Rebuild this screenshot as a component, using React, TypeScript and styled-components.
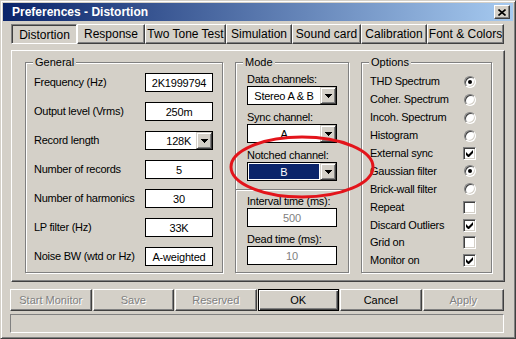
import React from "react";
import styled, { createGlobalStyle, css } from "styled-components";

const FACE = "#D4D0C8";

const Global = createGlobalStyle`
  html, body { margin: 0; padding: 0; background: ${FACE}; }
  body { font-family: "Liberation Sans", Arial, sans-serif; font-size: 11px; color: #000; }
  * { box-sizing: border-box; }
`;

const raised = css`
  border: 1px solid;
  border-color: #fff #404040 #404040 #fff;
  box-shadow: inset -1px -1px 0 #808080;
`;

const Window = styled.div`
  position: relative;
  width: 516px;
  height: 339px;
  background: ${FACE};
  border: 1px solid;
  border-color: ${FACE} #404040 #404040 ${FACE};
  box-shadow: inset 1px 1px 0 #fff, inset -1px -1px 0 #808080;
  padding: 2px;
  display: flex;
  flex-direction: column;
`;

const TitleBar = styled.div`
  height: 18px;
  flex: none;
  background: linear-gradient(to right, #0a246a, #a6caf0);
  display: flex;
  align-items: center;
  justify-content: space-between;
  padding: 0 3px 0 9px;
`;

const Title = styled.span`
  color: #fff;
  font-weight: bold;
  font-size: 12px;
  line-height: 14px;
`;

const CloseButton = styled.div`
  width: 16px;
  height: 14px;
  background: ${FACE};
  ${raised};
  display: flex;
  align-items: center;
  justify-content: center;
`;

const TabBar = styled.div`
  display: flex;
  margin: 3px 0 0 8px;
  height: 20px;
  flex: none;
`;

const Tab = styled.div<{ $w: number; $active?: boolean }>`
  width: ${(p) => p.$w}px;
  height: 20px;
  display: flex;
  align-items: center;
  justify-content: center;
  font-size: 12px;
  white-space: nowrap;
  background: ${FACE};
  ${(p) =>
    p.$active
      ? css`
          border: 1px solid;
          border-color: #808080 #fff #fff #808080;
          box-shadow: inset 1px 1px 0 #404040;
          padding: 1px 0 0 1px;
        `
      : raised}
`;

const Panel = styled.div`
  margin: 6px 0 0 8px;
  width: 494px;
  height: 232px;
  flex: none;
  ${raised};
  padding: 11px 0 0 13px;
  display: grid;
  grid-template-columns: 198px 114px 131px;
  column-gap: 12px;
  align-items: start;
`;

const Group = styled.div`
  position: relative;
  height: 211px;
  border: 1px solid #808080;
  box-shadow: inset 1px 1px 0 #fff, 1px 1px 0 #fff;
`;

const Caption = styled.span`
  position: absolute;
  top: -7px;
  left: 7px;
  padding: 0 2px;
  background: ${FACE};
  line-height: 13px;
  font-size: 11px;
`;

const GeneralBody = styled.div`
  display: flex;
  flex-direction: column;
  gap: 10px;
  padding: 10px 9px 0 8px;
`;

const Row = styled.div`
  display: flex;
  align-items: center;
  justify-content: space-between;
  height: 19px;
`;

const Label = styled.span`
  font-size: 11px;
  letter-spacing: -0.25px;
  white-space: nowrap;
  line-height: 13px;
`;

const EditBox = styled.div<{ $w: number; $muted?: boolean }>`
  width: ${(p) => p.$w}px;
  height: 19px;
  border: 1px solid #000;
  background: #fff;
  display: flex;
  align-items: center;
  justify-content: center;
  font-size: 11px;
  letter-spacing: -0.2px;
  color: ${(p) => (p.$muted ? "#808080" : "#000")};
`;

const Combo = styled.div<{ $w: number }>`
  width: ${(p) => p.$w}px;
  height: 19px;
  border: 1px solid #000;
  background: #fff;
  display: flex;
  align-items: center;
`;

const ComboField = styled.div<{ $align: "center" | "flex-end" }>`
  flex: 1;
  align-self: stretch;
  display: flex;
  align-items: center;
  justify-content: ${(p) => p.$align};
  padding: ${(p) => (p.$align === "flex-end" ? "0 5px 0 0" : "0")};
  font-size: 11px;
  letter-spacing: -0.25px;
  white-space: nowrap;
`;

const Highlight = styled.div`
  flex: 1;
  align-self: stretch;
  margin: 1px;
  background: #0a246a;
  color: #fff;
  display: flex;
  align-items: center;
  justify-content: center;
  font-size: 11px;
`;

const DropButton = styled.div`
  width: 16px;
  height: 17px;
  flex: none;
  background: ${FACE};
  border: 1px solid;
  border-color: ${FACE} #404040 #404040 ${FACE};
  box-shadow: inset 1px 1px 0 #fff, inset -1px -1px 0 #808080;
  display: flex;
  align-items: center;
  justify-content: center;
`;

const ModeBody = styled.div`
  display: flex;
  flex-direction: column;
  padding: 10px 11px 0 11px;
`;

const Stack = styled.div<{ $mt?: number }>`
  display: flex;
  flex-direction: column;
  gap: 6px;
  margin-top: ${(p) => p.$mt ?? 0}px;
`;

const Field = styled.div`
  display: flex;
  flex-direction: column;
`;

const Divider = styled.div`
  height: 2px;
  margin: 8px -11px 0 -11px;
  border-top: 1px solid #808080;
  border-bottom: 1px solid #fff;
`;

const OptionsBody = styled.div`
  display: flex;
  flex-direction: column;
  padding: 10px 15px 0 8px;
`;

const OptionRow = styled.div`
  display: flex;
  align-items: center;
  justify-content: space-between;
  height: 17.9px;
`;

const Radio = styled.div<{ $on?: boolean }>`
  position: relative;
  width: 12px;
  height: 12px;
  border-radius: 50%;
  background: #fff;
  border: 1px solid;
  border-color: #808080 #fff #fff #808080;
  box-shadow: inset 1px 1px 0 #404040, inset -1px -1px 0 ${FACE};
  &::after {
    content: "";
    display: ${(p) => (p.$on ? "block" : "none")};
    position: absolute;
    left: 3px;
    top: 3px;
    width: 4px;
    height: 4px;
    border-radius: 50%;
    background: #000;
  }
`;

const CheckBox = styled.div`
  width: 13px;
  height: 13px;
  background: #fff;
  border: 1px solid;
  border-color: #808080 #fff #fff #808080;
  box-shadow: inset 1px 1px 0 #404040, inset -1px -1px 0 ${FACE};
  display: flex;
  align-items: center;
  justify-content: center;
`;

const ButtonRow = styled.div`
  margin: 7px 0 0 7px;
  width: 494px;
  height: 22px;
  flex: none;
  display: grid;
  grid-template-columns: repeat(6, 1fr);
  column-gap: 1px;
`;

const Button = styled.div<{ $disabled?: boolean; $default?: boolean }>`
  height: 22px;
  background: ${FACE};
  display: flex;
  align-items: center;
  justify-content: center;
  font-size: 11px;
  white-space: nowrap;
  ${(p) =>
    p.$default
      ? css`
          border: 1px solid #000;
          box-shadow: inset 1px 1px 0 #fff, inset -1px -1px 0 #404040, inset -2px -2px 0 #808080;
        `
      : raised}
  ${(p) =>
    p.$disabled &&
    css`
      color: #808080;
      text-shadow: 1px 1px 0 #fff;
    `}
`;

const StatusBar = styled.div`
  margin: 3px 0 0 7px;
  width: 494px;
  height: 19px;
  flex: none;
  border: 1px solid;
  border-color: #808080 #fff #fff #808080;
`;

const Annotation = styled.svg`
  position: absolute;
  left: 225px;
  top: 131px;
  pointer-events: none;
`;

const Arrow = () => (
  <svg width="7" height="4" viewBox="0 0 7 4">
    <path d="M0 0h7L3.5 4z" fill="#000" shapeRendering="crispEdges" />
  </svg>
);

const Check = () => (
  <svg width="7" height="7" viewBox="0 0 7 7">
    <path d="M0 2v3l2 2h1l4-4V0L2.5 4.5z" fill="#000" />
  </svg>
);

const ComboBox = ({
  w,
  value,
  align = "center",
  selected,
}: {
  w: number;
  value: string;
  align?: "center" | "flex-end";
  selected?: boolean;
}) => (
  <Combo $w={w}>
    {selected ? <Highlight>{value}</Highlight> : <ComboField $align={align}>{value}</ComboField>}
    <DropButton>
      <Arrow />
    </DropButton>
  </Combo>
);

const tabs: [string, number][] = [
  ["Distortion", 66],
  ["Response", 68],
  ["Two Tone Test", 81],
  ["Simulation", 66],
  ["Sound card", 69],
  ["Calibration", 66],
  ["Font & Colors", 77],
];

type Opt = { label: string; kind: "radio" | "check"; on: boolean };
const options: Opt[] = [
  { label: "THD Spectrum", kind: "radio", on: true },
  { label: "Coher. Spectrum", kind: "radio", on: false },
  { label: "Incoh. Spectrum", kind: "radio", on: false },
  { label: "Histogram", kind: "radio", on: false },
  { label: "External sync", kind: "check", on: true },
  { label: "Gaussian filter", kind: "radio", on: true },
  { label: "Brick-wall filter", kind: "radio", on: false },
  { label: "Repeat", kind: "check", on: false },
  { label: "Discard Outliers", kind: "check", on: true },
  { label: "Grid on", kind: "check", on: false },
  { label: "Monitor on", kind: "check", on: true },
];

export default function App() {
  return (
    <>
      <Global />
      <Window>
        <TitleBar>
          <Title>Preferences - Distortion</Title>
          <CloseButton>
            <svg width="8" height="7" viewBox="0 0 8 7">
              <path d="M0.5 0.5l7 6M7.5 0.5l-7 6" stroke="#000" strokeWidth="1.6" />
            </svg>
          </CloseButton>
        </TitleBar>

        <TabBar>
          {tabs.map(([t, w], i) => (
            <Tab key={t} $w={w} $active={i === 0}>
              {t}
            </Tab>
          ))}
        </TabBar>

        <Panel>
          <Group>
            <Caption>General</Caption>
            <GeneralBody>
              <Row>
                <Label>Frequency (Hz)</Label>
                <EditBox $w={68}>2K1999794</EditBox>
              </Row>
              <Row>
                <Label>Output level (Vrms)</Label>
                <EditBox $w={68}>250m</EditBox>
              </Row>
              <Row>
                <Label>Record length</Label>
                <ComboBox w={68} value="128K" align="flex-end" />
              </Row>
              <Row>
                <Label>Number of records</Label>
                <EditBox $w={68}>5</EditBox>
              </Row>
              <Row>
                <Label>Number of harmonics</Label>
                <EditBox $w={68}>30</EditBox>
              </Row>
              <Row>
                <Label>LP filter (Hz)</Label>
                <EditBox $w={68}>33K</EditBox>
              </Row>
              <Row>
                <Label>Noise BW (wtd or Hz)</Label>
                <EditBox $w={68}>A-weighted</EditBox>
              </Row>
            </GeneralBody>
          </Group>

          <Group>
            <Caption>Mode</Caption>
            <ModeBody>
              <Stack>
                <Field>
                  <Label>Data channels:</Label>
                  <ComboBox w={90} value="Stereo A & B" />
                </Field>
                <Field>
                  <Label>Sync channel:</Label>
                  <ComboBox w={90} value="A" />
                </Field>
                <Field>
                  <Label>Notched channel:</Label>
                  <ComboBox w={90} value="B" selected />
                </Field>
              </Stack>
              <Divider />
              <Stack $mt={4}>
                <Field>
                  <Label>Interval time (ms):</Label>
                  <EditBox $w={90} $muted>
                    500
                  </EditBox>
                </Field>
                <Field>
                  <Label>Dead time (ms):</Label>
                  <EditBox $w={90} $muted>
                    10
                  </EditBox>
                </Field>
              </Stack>
            </ModeBody>
          </Group>

          <Group>
            <Caption>Options</Caption>
            <OptionsBody>
              {options.map((o) => (
                <OptionRow key={o.label}>
                  <Label>{o.label}</Label>
                  {o.kind === "radio" ? <Radio $on={o.on} /> : <CheckBox>{o.on && <Check />}</CheckBox>}
                </OptionRow>
              ))}
            </OptionsBody>
          </Group>
        </Panel>

        <ButtonRow>
          <Button $disabled>Start Monitor</Button>
          <Button $disabled>Save</Button>
          <Button $disabled>Reserved</Button>
          <Button $default>OK</Button>
          <Button>Cancel</Button>
          <Button $disabled>Apply</Button>
        </ButtonRow>

        <StatusBar />

        <Annotation width="152" height="70" viewBox="0 0 152 70">
          <ellipse cx="76" cy="35" rx="71" ry="30" fill="none" stroke="#e3141b" strokeWidth="3" />
        </Annotation>
      </Window>
    </>
  );
}
